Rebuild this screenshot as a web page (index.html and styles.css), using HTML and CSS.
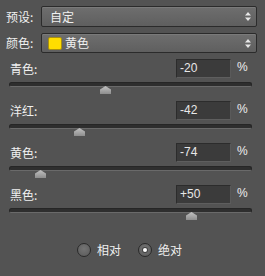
FILE: index.html
```html
<!DOCTYPE html>
<html>
<head>
<meta charset="utf-8">
<link rel="stylesheet" href="styles.css">
</head>
<body>
<div class="panel">
  <div class="sel-row">
    <span class="lbl">预设:</span>
    <div class="select"><span class="sel-text">自定</span>
      <svg class="arrows" width="6" height="9" viewBox="0 0 6 9"><path d="M3 0 L6 3.5 L0 3.5 Z M3 9 L6 5.5 L0 5.5 Z" fill="#e6e6e6"/></svg>
    </div>
  </div>
  <div class="sel-row">
    <span class="lbl">颜色:</span>
    <div class="select"><span class="swatch"></span><span class="sel-text2">黄色</span>
      <svg class="arrows" width="6" height="9" viewBox="0 0 6 9"><path d="M3 0 L6 3.5 L0 3.5 Z M3 9 L6 5.5 L0 5.5 Z" fill="#e6e6e6"/></svg>
    </div>
  </div>

  <div class="sliders">
    <div class="slider">
      <div class="head"><span class="slbl">青色:</span><span class="num">-20</span><span class="pct">%</span></div>
      <div class="track"><span class="thumb" style="left:91px"></span></div>
    </div>
    <div class="slider">
      <div class="head"><span class="slbl">洋红:</span><span class="num">-42</span><span class="pct">%</span></div>
      <div class="track"><span class="thumb" style="left:65px"></span></div>
    </div>
    <div class="slider">
      <div class="head"><span class="slbl">黄色:</span><span class="num">-74</span><span class="pct">%</span></div>
      <div class="track"><span class="thumb" style="left:26px"></span></div>
    </div>
    <div class="slider">
      <div class="head"><span class="slbl">黑色:</span><span class="num">+50</span><span class="pct">%</span></div>
      <div class="track"><span class="thumb" style="left:177px"></span></div>
    </div>
  </div>

  <div class="radios">
    <label class="radio"><span class="dot"></span><span>相对</span></label>
    <label class="radio"><span class="dot on"></span><span>绝对</span></label>
  </div>
</div>
</body>
</html>
```

FILE: styles.css
```css
html, body {
  margin: 0;
  padding: 0;
  background: #535353;
}
body {
  font-family: "Noto Sans CJK SC", "Liberation Sans", sans-serif;
  font-size: 12px;
  color: #f0f0f0;
  width: 265px;
  height: 276px;
  overflow: hidden;
}
.panel {
  padding: 6px 8px 0 6px;
}
.sel-row {
  display: flex;
  align-items: center;
  height: 21px;
  margin-bottom: 6px;
}
.sel-row + .sel-row {
  height: 20px;
}
.lbl {
  width: 35px;
  flex: none;
  line-height: 14px;
}
.select {
  flex: 1;
  height: 100%;
  box-sizing: border-box;
  border: 1px solid #2b2b2b;
  border-radius: 2px;
  background: linear-gradient(#6e6e6e, #5f5f5f);
  box-shadow: inset 0 1px 0 #7a7a7a;
  display: flex;
  align-items: center;
  padding: 0 5px 0 8px;
}
.sel-text {
  flex: 1;
  line-height: 14px;
}
.sel-text2 {
  flex: 1;
  line-height: 14px;
  margin-left: 3px;
}
.swatch {
  width: 14px;
  height: 13px;
  box-sizing: border-box;
  background: #ffdd00;
  border: 1px solid #a88f10;
  border-radius: 2px;
  margin-left: -2px;
}
.arrows {
  flex: none;
  display: block;
}
.sliders {
  margin-top: 0;
  padding-left: 3px;
}
.slider {
  width: 246px;
  height: 42px;
}
.head {
  display: flex;
  align-items: center;
  height: 19px;
}
.slbl {
  width: 167px;
  flex: none;
  padding-left: 1px;
  box-sizing: border-box;
  line-height: 14px;
}
.num {
  width: 55px;
  height: 19px;
  box-sizing: border-box;
  background: #3b3b3b;
  border: 1px solid #2c2c2c;
  border-bottom-color: #5e5e5e;
  border-right-color: #5a5a5a;
  font-family: "Liberation Sans", "DejaVu Sans", sans-serif;
  font-size: 12px;
  line-height: 17px;
  padding-left: 3px;
  color: #e8e8e8;
  flex: none;
}
.pct {
  font-family: "Liberation Sans", sans-serif;
  font-size: 12px;
  margin-left: 6px;
  margin-top: -3px;
  color: #eeeeee;
}
.track {
  position: relative;
  width: 243px;
  height: 5px;
  box-sizing: border-box;
  margin-top: 4px;
  background: #2e2e2e;
  border: 1px solid #262626;
  border-bottom-color: #6a6a6a;
  border-radius: 3px;
}
.thumb {
  position: absolute;
  top: 3px;
  width: 11px;
  height: 8px;
  background: linear-gradient(#c2c2c2, #8e8e8e);
  clip-path: polygon(50% 0, 100% 45%, 100% 100%, 0 100%, 0 45%);
  margin-left: -1px;
}
.radios {
  display: flex;
  align-items: center;
  padding-left: 71px;
  margin-top: 16px;
}
.radio {
  display: flex;
  align-items: center;
  gap: 6px;
  margin-right: 17px;
  line-height: 14px;
}
.dot {
  width: 14px;
  height: 14px;
  box-sizing: border-box;
  border-radius: 50%;
  border: 1px solid #2a2a2a;
  background: radial-gradient(circle at 50% 40%, #747474, #5a5a5a);
  display: flex;
  align-items: center;
  justify-content: center;
}
.dot.on::after {
  content: "";
  width: 4px;
  height: 4px;
  border-radius: 50%;
  background: #ffffff;
  box-shadow: 0 0 0 1px #444;
}
```
